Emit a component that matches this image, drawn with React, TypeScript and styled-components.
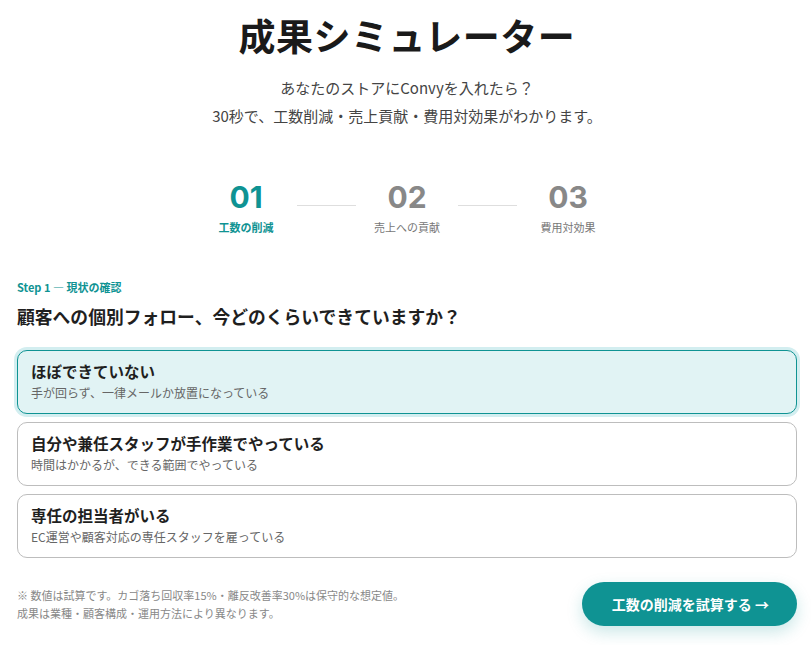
import styled, { createGlobalStyle } from "styled-components";
import { Fragment, useState } from "react";

const GlobalStyle = createGlobalStyle`
    html, body {
        margin: 0;
        padding: 0;
        background: #ffffff;
        font-family: "Noto Sans CJK JP", "Noto Sans", sans-serif;
        color: #1f1f1f;
    }
    * { box-sizing: border-box; }
`;

const TEAL = "#0f9393";

const Page = styled.main`
    padding: 10px 14px 20px 17px;
`;

const Hero = styled.header`
    display: flex;
    flex-direction: column;
    align-items: center;
`;

const Title = styled.h1`
    margin: 0;
    font-size: 37px;
    font-weight: 700;
    line-height: 50px;
    letter-spacing: 0.5px;
    color: #1a1a1a;
`;

const Lead = styled.p`
    margin: 14px 0 0;
    text-align: center;
    font-size: 15px;
    line-height: 28px;
    color: #444;
`;

const Steps = styled.ol`
    list-style: none;
    margin: 49px 0 0;
    padding: 0;
    display: flex;
    justify-content: center;
    align-items: flex-start;
`;

const StepItem = styled.li<{ $active?: boolean }>`
    width: 102px;
    display: flex;
    flex-direction: column;
    align-items: center;
    color: ${p => (p.$active ? TEAL : "#888")};
`;

const StepNum = styled.span`
    font-family: "Inter", "Noto Sans", sans-serif;
    font-size: 30px;
    font-weight: 700;
    line-height: 36px;
`;

const StepLabel = styled.span<{ $active?: boolean }>`
    margin-top: 5px;
    font-size: 11px;
    line-height: 15px;
    font-weight: ${p => (p.$active ? 700 : 400)};
    color: ${p => (p.$active ? TEAL : "#777")};
`;

const StepLine = styled.li`
    width: 59px;
    height: 1px;
    margin-top: 26px;
    background: #dedede;
`;

const Section = styled.section`
    margin-top: 44px;
`;

const Eyebrow = styled.div`
    font-size: 11px;
    font-weight: 700;
    color: ${TEAL};
    line-height: 16px;
`;

const Question = styled.h2`
    margin: 8px 0 0;
    font-size: 17.8px;
    font-weight: 700;
    line-height: 26px;
    color: #1f1f1f;
`;

const Options = styled.div`
    margin-top: 21px;
    display: flex;
    flex-direction: column;
    gap: 8px;
`;

const Option = styled.button<{ $selected?: boolean }>`
    display: flex;
    flex-direction: column;
    align-items: flex-start;
    height: 64px;
    padding: 9px 13px;
    border-radius: 10px;
    text-align: left;
    font-family: inherit;
    cursor: pointer;
    border: 1px solid ${p => (p.$selected ? TEAL : "#bdbdbd")};
    background: ${p => (p.$selected ? "#e1f3f4" : "#fff")};
    box-shadow: ${p => (p.$selected ? "0 0 0 3px #d3eef0" : "none")};
`;

const OptionTitle = styled.span`
    font-size: 15.5px;
    font-weight: 700;
    line-height: 22px;
    color: #1f1f1f;
`;

const OptionDesc = styled.span`
    margin-top: 2px;
    font-size: 12px;
    line-height: 18px;
    color: #666;
`;

const Footer = styled.footer`
    margin-top: 24px;
    display: flex;
    justify-content: space-between;
    align-items: center;
`;

const Note = styled.p`
    margin: 0;
    font-size: 11px;
    line-height: 18px;
    color: #888;
`;

const CTA = styled.button`
    height: 44px;
    padding: 0 28px 0 30px;
    border: none;
    border-radius: 22px;
    background: ${TEAL};
    color: #fff;
    font-family: inherit;
    font-size: 14px;
    font-weight: 700;
    cursor: pointer;
    box-shadow: 0 6px 16px rgba(15, 147, 147, 0.22);
`;

const steps = [
    { num: "01", label: "工数の削減" },
    { num: "02", label: "売上への貢献" },
    { num: "03", label: "費用対効果" },
];

const options = [
    { title: "ほぼできていない", desc: "手が回らず、一律メールか放置になっている" },
    { title: "自分や兼任スタッフが手作業でやっている", desc: "時間はかかるが、できる範囲でやっている" },
    { title: "専任の担当者がいる", desc: "EC運営や顧客対応の専任スタッフを雇っている" },
];

export default function App() {
    const [selected, setSelected] = useState(0);

    return (
        <Page>
            <GlobalStyle />
            <Hero>
                <Title>成果シミュレーター</Title>
                <Lead>
                    あなたのストアにConvyを入れたら？
                    <br />
                    30秒で、工数削減・売上貢献・費用対効果がわかります。
                </Lead>
                <Steps>
                    {steps.map((s, i) => (
                        <Fragment key={s.num}>
                            {i > 0 && <StepLine />}
                            <StepItem $active={i === 0}>
                                <StepNum>{s.num}</StepNum>
                                <StepLabel $active={i === 0}>{s.label}</StepLabel>
                            </StepItem>
                        </Fragment>
                    ))}
                </Steps>
            </Hero>
            <Section>
                <Eyebrow>Step 1 ― 現状の確認</Eyebrow>
                <Question>顧客への個別フォロー、今どのくらいできていますか？</Question>
                <Options>
                    {options.map((o, i) => (
                        <Option key={o.title} $selected={i === selected} onClick={() => setSelected(i)}>
                            <OptionTitle>{o.title}</OptionTitle>
                            <OptionDesc>{o.desc}</OptionDesc>
                        </Option>
                    ))}
                </Options>
            </Section>
            <Footer>
                <Note>
                    ※ 数値は試算です。カゴ落ち回収率15%・離反改善率30%は保守的な想定値。
                    <br />
                    成果は業種・顧客構成・運用方法により異なります。
                </Note>
                <CTA>工数の削減を試算する →</CTA>
            </Footer>
        </Page>
    );
}
